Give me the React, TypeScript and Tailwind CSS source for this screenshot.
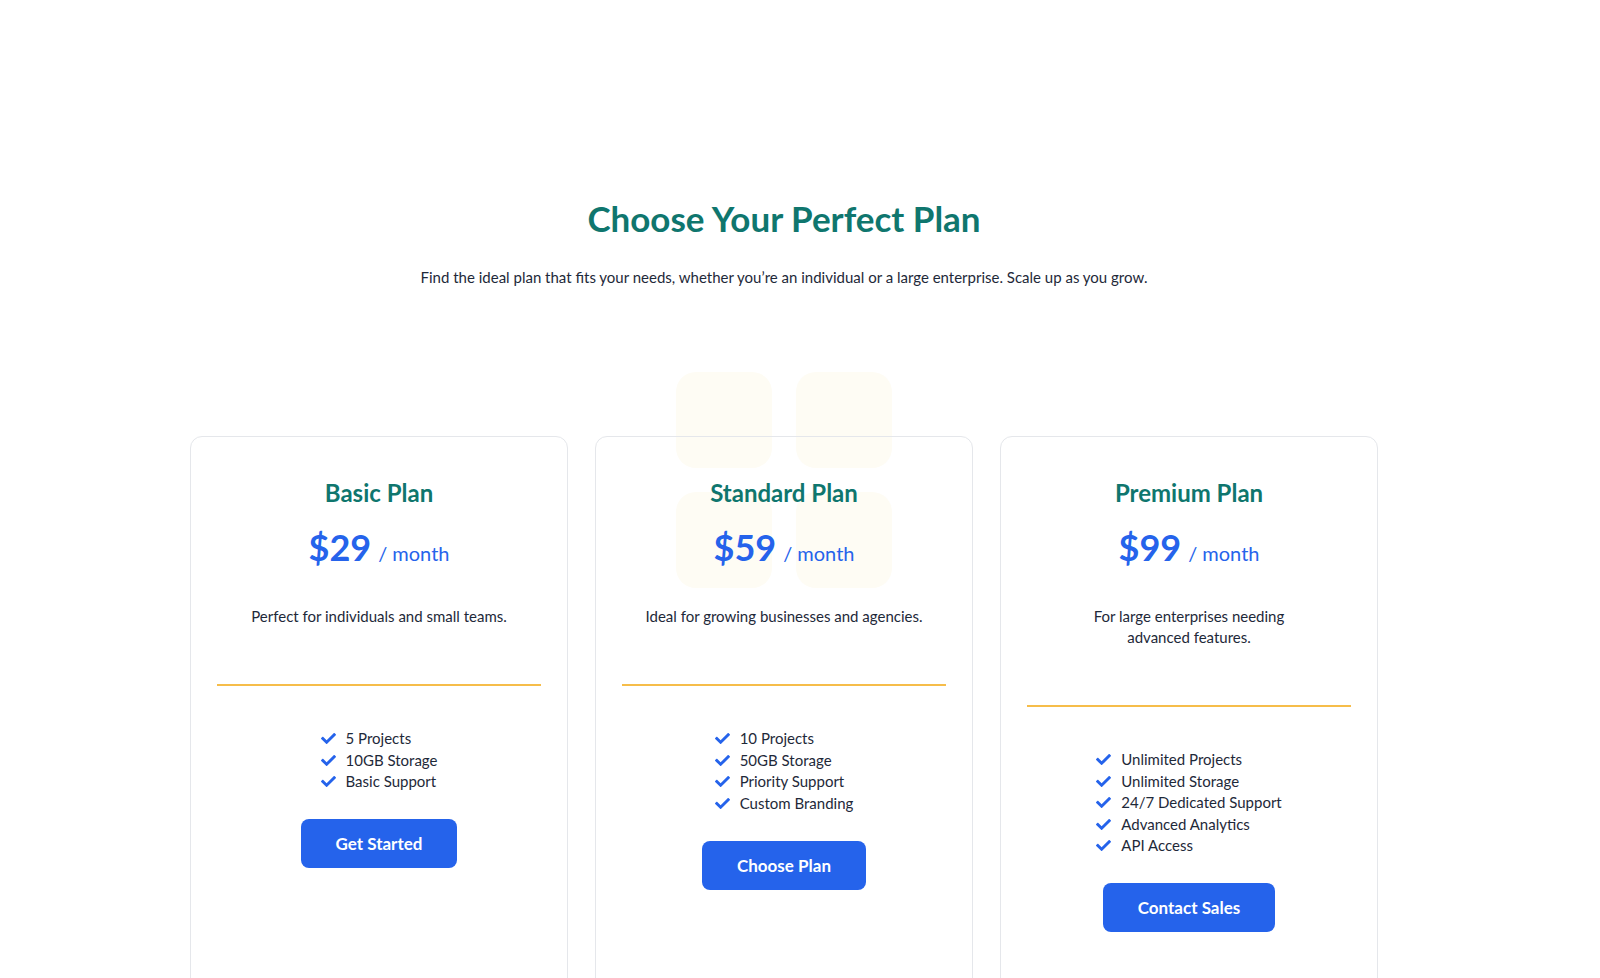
import React from "react";
import { FaCheck } from "react-icons/fa";

interface Plan {
  name: string;
  price: string;
  description: string;
  features: string[];
  cta: string;
}

const plans: Plan[] = [
  {
    name: "Basic Plan",
    price: "$29",
    description: "Perfect for individuals and small teams.",
    features: ["5 Projects", "10GB Storage", "Basic Support"],
    cta: "Get Started",
  },
  {
    name: "Standard Plan",
    price: "$59",
    description: "Ideal for growing businesses and agencies.",
    features: ["10 Projects", "50GB Storage", "Priority Support", "Custom Branding"],
    cta: "Choose Plan",
  },
  {
    name: "Premium Plan",
    price: "$99",
    description: "For large enterprises needing\nadvanced features.",
    features: [
      "Unlimited Projects",
      "Unlimited Storage",
      "24/7 Dedicated Support",
      "Advanced Analytics",
      "API Access",
    ],
    cta: "Contact Sales",
  },
];

const PlanCard: React.FC<{ plan: Plan }> = ({ plan }) => (
  <div className="relative w-[378px] h-[600px] rounded-xl border border-gray-200 px-[26px] pt-[38px] text-center">
    <h3 className="text-[24px] font-bold leading-[36px] text-[#0f766e]">{plan.name}</h3>
    <div className="mt-[12px] flex items-baseline justify-center gap-[7px] text-[#2563eb]">
      <span className="text-[36px] font-bold leading-[48px]">{plan.price}</span>
      <span className="text-[20px] leading-[28px]">/ month</span>
    </div>
    <p className="mx-auto mt-[35px] max-w-[300px] whitespace-pre-line text-[15px] leading-[21px] text-gray-800">
      {plan.description}
    </p>
    <div className="mt-[57px] h-[2px] bg-[#f6bd4a]" />
    <ul className="mx-auto mt-[42px] inline-block text-left">
      {plan.features.map((f) => (
        <li key={f} className="flex items-center gap-[10px] text-[15px] leading-[21.5px] text-gray-800">
          <FaCheck className="h-[15px] w-[15px] text-[#2563eb]" />
          {f}
        </li>
      ))}
    </ul>
    <div className="mt-[24px]">
      <button className="rounded-lg bg-[#2563eb] px-[35px] py-[12px] text-[17px] font-bold leading-[25px] text-white">
        {plan.cta}
      </button>
    </div>
  </div>
);

export default function App() {
  return (
    <div
      className="h-[978px] overflow-hidden bg-white pr-[32px]"
      style={{ fontFamily: "Lato, 'Noto Sans', sans-serif" }}
    >
      <div className="flex flex-col items-center pt-[194px]">
        <h1 className="text-[35px] font-bold leading-[48px] text-[#0f766e]">
          Choose Your Perfect Plan
        </h1>
        <p className="mt-[24px] text-[15px] leading-[22px] text-gray-800">
          Find the ideal plan that fits your needs, whether you’re an individual or a large enterprise. Scale up as you grow.
        </p>
        <div className="relative mt-[148px] flex gap-[27px]">
          {/* decorative tiles behind the middle card */}
          <div className="pointer-events-none absolute left-1/2 top-[-64px] grid -translate-x-1/2 grid-cols-2 gap-[24px]">
            <div className="h-[96px] w-[96px] rounded-[20px] bg-[#fefcf4]" />
            <div className="h-[96px] w-[96px] rounded-[20px] bg-[#fefcf4]" />
            <div className="h-[96px] w-[96px] rounded-[20px] bg-[#fefcf4]" />
            <div className="h-[96px] w-[96px] rounded-[20px] bg-[#fefcf4]" />
          </div>
          {plans.map((p) => (
            <PlanCard key={p.name} plan={p} />
          ))}
        </div>
      </div>
    </div>
  );
}
